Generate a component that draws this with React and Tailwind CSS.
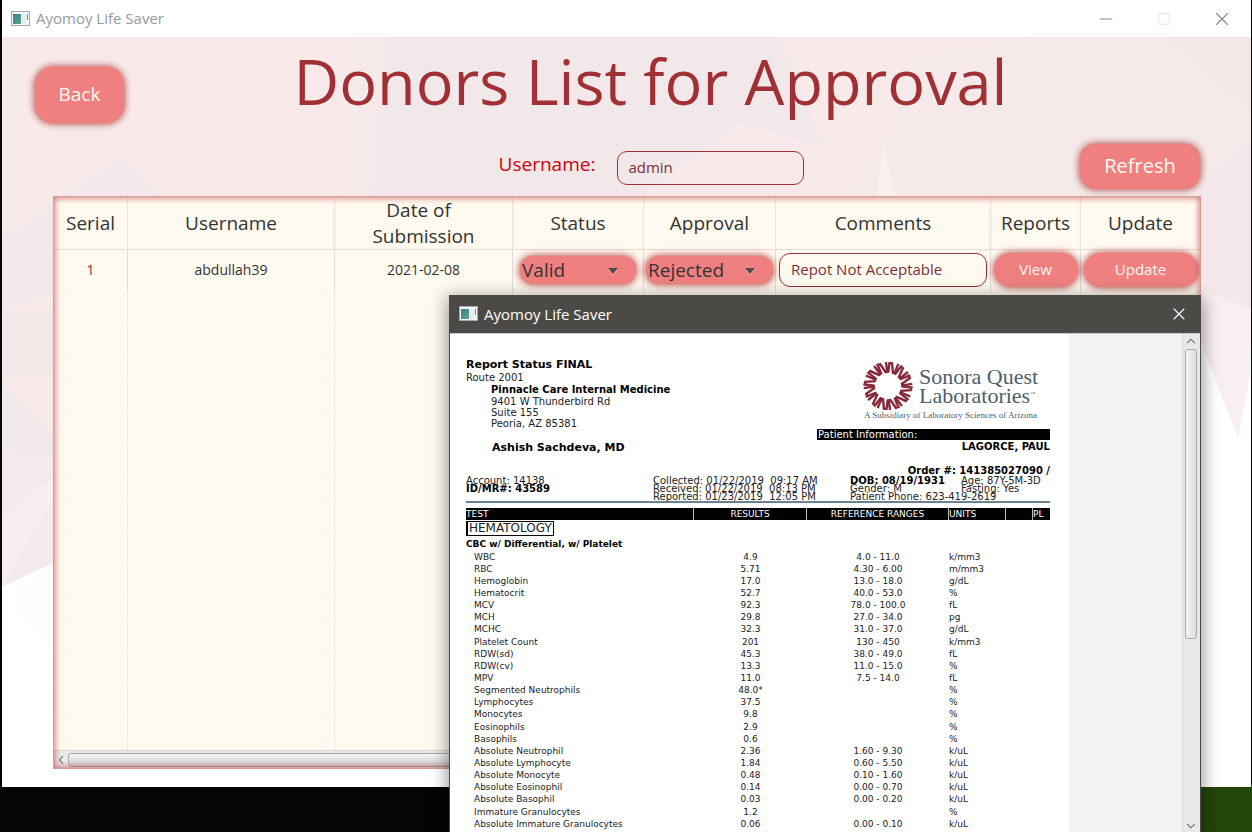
import React from "react";
import { Minus, Square, X, ChevronUp, ChevronDown, ChevronLeft } from "lucide-react";

const RESULTS = [
  ["WBC", "4.9", "4.0 - 11.0", "k/mm3"],
  ["RBC", "5.71", "4.30 - 6.00", "m/mm3"],
  ["Hemoglobin", "17.0", "13.0 - 18.0", "g/dL"],
  ["Hematocrit", "52.7", "40.0 - 53.0", "%"],
  ["MCV", "92.3", "78.0 - 100.0", "fL"],
  ["MCH", "29.8", "27.0 - 34.0", "pg"],
  ["MCHC", "32.3", "31.0 - 37.0", "g/dL"],
  ["Platelet Count", "201", "130 - 450", "k/mm3"],
  ["RDW(sd)", "45.3", "38.0 - 49.0", "fL"],
  ["RDW(cv)", "13.3", "11.0 - 15.0", "%"],
  ["MPV", "11.0", "7.5 - 14.0", "fL"],
  ["Segmented Neutrophils", "48.0*", "", "%"],
  ["Lymphocytes", "37.5", "", "%"],
  ["Monocytes", "9.8", "", "%"],
  ["Eosinophils", "2.9", "", "%"],
  ["Basophils", "0.6", "", "%"],
  ["Absolute Neutrophil", "2.36", "1.60 - 9.30", "k/uL"],
  ["Absolute Lymphocyte", "1.84", "0.60 - 5.50", "k/uL"],
  ["Absolute Monocyte", "0.48", "0.10 - 1.60", "k/uL"],
  ["Absolute Eosinophil", "0.14", "0.00 - 0.70", "k/uL"],
  ["Absolute Basophil", "0.03", "0.00 - 0.20", "k/uL"],
  ["Immature Granulocytes", "1.2", "", "%"],
  ["Absolute Immature Granulocytes", "0.06", "0.00 - 0.10", "k/uL"],
];

const COLUMNS = ["Serial", "Username", "Date of  \nSubmission", "Status", "Approval", "Comments", "Reports", "Update"];

const PILL = "bg-[#f08080] pb-[2px] text-[#fffaf0] shadow-[0_0_7px_1px_#a52a2acc]";

function AppIcon() {
  return (
    <svg width="19" height="16" viewBox="0 0 19 16" aria-hidden="true">
      <defs>
        <linearGradient id="pane" x1="0" y1="0" x2="1" y2="1">
          <stop offset="0" stopColor="#3f7fa0" />
          <stop offset="1" stopColor="#56a878" />
        </linearGradient>
      </defs>
      <rect x="0.5" y="0.5" width="18" height="14" fill="#f4f7f8" stroke="#a3a9ad" />
      <rect x="2" y="3" width="8" height="10" fill="url(#pane)" />
      <rect x="11" y="3" width="4" height="10" fill="#e3eeee" />
      <rect x="16" y="3" width="1" height="6" fill="#4f9d86" />
    </svg>
  );
}

function Backdrop() {
  return (
    <svg className="absolute inset-0 h-full w-full" viewBox="2 37 1249 750" preserveAspectRatio="none" aria-hidden="true">
      <defs>
        <linearGradient id="veil" x1="0" y1="0" x2="1" y2="0">
          <stop offset="0" stopColor="#f9eaea" />
          <stop offset="0.4" stopColor="#f3e8e9" />
        </linearGradient>
      </defs>
      <rect x="2" y="37" width="1249" height="750" fill="#f9eaea" />
      <polygon points="325,37 780,37 830,160 660,197 250,197 300,120" fill="url(#veil)" />
      <polygon points="385,70 372,197 470,197 520,37 390,37" fill="#f3e8e9" />
      <polygon points="2,240 120,155 160,197 160,260 2,312" fill="#f3e8ea" />
      <polygon points="2,312 53,310 53,370 2,380" fill="#f2e8e7" />
      <polygon points="2,380 53,370 53,438" fill="#f8e9e9" />
      <polygon points="2,380 53,438 53,456 2,449" fill="#f1e8e9" />
      <polygon points="2,449 53,456 53,563 2,587" fill="#f4eaeb" />
      <polygon points="2,518 53,477 53,500 2,587" fill="#f8eeef" />
      <polygon points="740,123 830,150 830,197 640,197" fill="#f8eaea" />
      <polygon points="1030,37 1251,37 1251,270 1210,197 840,197 884,142 900,60" fill="#f5e9e9" />
      <polygon points="1165,37 1251,37 1251,110" fill="#f2e8e8" />
      <polygon points="884,142 896,197 876,197" fill="#fbf0f0" />
      <polygon points="1195,190 1251,140 1251,310 1195,300" fill="#f5e8ea" />
      <polygon points="1195,290 1251,310 1251,360 1195,350" fill="#f9eeef" />
      <polygon points="2,587 53,563 1200,300 1251,345 1251,787 2,787" fill="#ffffff" />
      <polygon points="12,600 53,563 53,650" fill="#fefbfc" />
      <polygon points="1180,280 1251,310 1250,375 1238,438 1200,340" fill="#f9eef0" />
    </svg>
  );
}

function Combo({ id, label, value, options, width }) {
  return (
    <div className={`relative mx-auto mt-[6px] ${width}`}>
      <label htmlFor={id} className="sr-only">{label}</label>
      <select id={id} defaultValue={value} className="block h-7 w-full appearance-none rounded-[13px] bg-[#f08080] pl-[2px] text-[19px] leading-normal text-[#333] shadow-[0_0_7px_1px_#a52a2acc]">
        {options.map((o) => <option key={o}>{o}</option>)}
      </select>
      <svg className="pointer-events-none absolute top-3 right-[18px]" width="10" height="7" viewBox="0 0 10 7" aria-hidden="true">
        <path d="M0 1h10L5 7z" fill="#f6b3b3" />
        <path d="M0 0h10L5 6z" fill="#4d4d4d" />
      </svg>
    </div>
  );
}

function DonorTable() {
  const cell = "border-r border-[#dcdcdc] p-0 pb-[2px] align-middle";
  return (
    <div className="relative flex h-[573px] flex-col overflow-hidden border border-[#d79a96] bg-[#fffaf0]">
      <table className="w-full table-fixed border-separate border-spacing-0 text-center text-[#333]">
        <colgroup>
          <col className="w-[74px]" />
          <col />
          <col className="w-[178px]" />
          <col className="w-[131px]" />
          <col className="w-[132px]" />
          <col className="w-[215px]" />
          <col className="w-[90px]" />
          <col className="w-[119px]" />
        </colgroup>
        <thead>
          <tr className="h-[53px]">
            {COLUMNS.map((c) => (
              <th key={c} className="border-r border-b border-r-[#fbdfda] border-b-[#e9dcd8] p-0 text-[19px] leading-[26px] font-normal whitespace-pre last:border-r-0">{c}</th>
            ))}
          </tr>
        </thead>
        <tbody>
          <tr className="h-[42px] text-[15px]">
            <td className={`${cell} text-sm text-[#8b2f20]`}>1</td>
            <td className={`${cell} text-sm`}>abdullah39</td>
            <td className={`${cell} text-sm`}>2021-02-08</td>
            <td className="border-r border-[#dcdcdc] p-0 align-top"><Combo id="status" label="Status" value="Valid" options={["Valid", "Invalid"]} width="w-[116px]" /></td>
            <td className="border-r border-[#dcdcdc] p-0 align-top"><Combo id="approval" label="Approval" value="Rejected" options={["Rejected", "Approved"]} width="w-[127px]" /></td>
            <td className={cell}>
              <input aria-label="Comments" defaultValue="Repot Not Acceptable" className="mx-auto block h-[34px] w-52 rounded-[11px] border border-[#a03035] bg-transparent px-[11px] pb-[2px] text-[15px] text-[#7a3035]" />
            </td>
            <td className={cell}>
              <button className={`${PILL} mx-auto block h-[34px] w-[84px] rounded-[17px]`}>View</button>
            </td>
            <td className="p-0 pb-[2px] align-middle">
              <button className={`${PILL} mx-auto block h-[34px] w-[114px] rounded-[17px]`}>Update</button>
            </td>
          </tr>
          {Array.from({ length: 16 }, (_, i) => (
            <tr key={i} className="h-[30px]">
              {COLUMNS.map((c) => <td key={c} className="border-t border-r border-t-[#fbf6ec] border-r-[#ebebeb] p-0 last:border-r-0" />)}
            </tr>
          ))}
        </tbody>
      </table>
      <div className="absolute inset-x-0 bottom-0 flex h-[18px] items-center border-t border-[#d4d4d4] bg-[#e9e9e9]">
        <button aria-label="Scroll left" className="flex h-4 w-[14px] items-center justify-center"><ChevronLeft size={16} strokeWidth={1.8} color="#555" /></button>
        <div className="mr-4 h-[14px] flex-1 rounded-[3px] border border-[#a9a9a9] bg-linear-to-b from-[#f4f4f4] to-[#cfcfcf]" />
      </div>
      <div className="pointer-events-none absolute inset-0 shadow-[inset_0_0_6px_1px_#b2222299]" />
    </div>
  );
}

function SunMark() {
  return (
    <svg className="shrink-0" width="50" height="48" viewBox="-26 -25 52 50" aria-hidden="true">
      {Array.from({ length: 12 }, (_, i) => (
        <path key={i} transform={`rotate(${i * 30 + 15})`} d="M-3.4 -13.5L-4.8 -24H-2L1.4 -14.6H3.2L4.4 -25" fill="none" stroke="#86293a" strokeWidth="2.5" />
      ))}
    </svg>
  );
}

function Report() {
  return (
    <article className="w-[619px] shrink-0 overflow-hidden bg-white pt-6 pl-4 font-['DejaVu_Sans'] text-[9px] text-[#222]">
      <div className="w-[584px]">
        <header className="flex justify-between">
          <div>
            <h2 className="text-[11px] leading-[14px] font-bold text-black">Report Status FINAL</h2>
            <p className="text-[10px] leading-3">Route 2001</p>
            <address className="pl-[25px] text-[10px] leading-[11px] not-italic">
              <strong className="block leading-3 text-black">Pinnacle Care Internal Medicine</strong>
              9401 W Thunderbird Rd<br />Suite 155<br />Peoria, AZ 85381
            </address>
            <p className="mt-3 pl-[26px] text-[11px] leading-[14px] font-bold text-black">Ashish Sachdeva, MD</p>
          </div>
          <div className="w-[233px] pt-1">
            <div className="flex h-12 gap-[6px] pl-[46px]">
              <SunMark />
              <div className="pt-[5px] font-['Liberation_Serif'] text-[22px] leading-[19px] whitespace-nowrap text-[#4d5f6b]">
                <p>Sonora Quest</p>
                <p>Laboratories<span className="align-super text-[5px] leading-none">™</span></p>
              </div>
            </div>
            <p className="pl-[47px] font-['Liberation_Serif'] text-[9px] leading-[10px] whitespace-nowrap text-[#4d5f6b]">A Subsidiary of Laboratory Sciences of Arizona</p>
            <p className="mt-[9px] bg-black pl-px text-[10px] leading-[11px] text-white">Patient Information:</p>
            <p className="mt-px text-right text-[10px] leading-3 font-bold text-black">LAGORCE, PAUL</p>
            <p className="mt-3 text-right text-[10px] leading-3 font-bold whitespace-nowrap text-black">Order #: 141385027090 /</p>
          </div>
        </header>
        <div className="flex border-b-2 border-[#6d8290] text-[10px] leading-[8px] whitespace-pre">
          <p className="w-[187px]">Account: 14138<br /><strong className="text-black">ID/MR#: 43589</strong></p>
          <p className="w-[197px]">{"Collected: 01/22/2019  09:17 AM\nReceived: 01/22/2019  08:13 PM\nReported: 01/23/2019  12:05 PM"}</p>
          <p className="w-[111px]"><strong className="text-black">DOB: 08/19/1931</strong><br />Gender: M<br />Patient Phone: 623-419-2619</p>
          <p>{"Age: 87Y-5M-3D\nFasting: Yes"}</p>
        </div>
        <table className="mt-[5px] w-full table-fixed border-separate border-spacing-0">
          <colgroup>
            <col className="w-[228px]" />
            <col className="w-[113px]" />
            <col className="w-[142px]" />
            <col className="w-[57px]" />
            <col className="w-[27px]" />
            <col className="w-[17px]" />
          </colgroup>
          <thead>
            <tr className="h-3 bg-black leading-3 text-white [&>th]:border-r [&>th]:border-[#bbb] [&>th]:p-0 [&>th]:font-normal [&>th:last-child]:border-0">
              <th className="text-left">TEST</th>
              <th>RESULTS</th>
              <th>REFERENCE RANGES</th>
              <th className="text-left">UNITS</th>
              <th />
              <th className="text-left">PL</th>
            </tr>
          </thead>
          <tbody className="[&_td]:p-0">
            <tr>
              <td colSpan={6} className="h-[17px]">
                <span className="block w-fit border border-l-2 border-black px-px text-xs leading-[13px]">HEMATOLOGY</span>
              </td>
            </tr>
            <tr>
              <td colSpan={6} className="h-[13px] leading-3 font-bold text-black">CBC w/ Differential, w/ Platelet</td>
            </tr>
          </tbody>
          <tbody className="[&_td]:p-0">
            {RESULTS.map(([test, result, range, unit]) => (
              <tr key={test} className="h-3 leading-3 whitespace-nowrap nth-[7n+1]:h-[13px]">
                <td className="pl-2!">{test}</td>
                <td className="text-center">{result}</td>
                <td className="text-center">{range}</td>
                <td>{unit}</td>
                <td colSpan={2} />
              </tr>
            ))}
          </tbody>
        </table>
      </div>
    </article>
  );
}

function ReportWindow() {
  return (
    <section aria-label="Report" className="absolute top-[295px] right-[51px] bottom-0 left-[449px] flex flex-col border-x border-[#4b4a47] shadow-[0_4px_16px_2px_#00000066]">
      <header className="flex h-[38px] shrink-0 items-center bg-[#4b4a47] pr-[11px] pl-[9px] text-[15px] text-white">
        <AppIcon />
        <span className="ml-[6px] flex-1">Ayomoy Life Saver</span>
        <button aria-label="Close report"><X size={20} strokeWidth={1.3} /></button>
      </header>
      <div className="flex min-h-0 flex-1 overflow-hidden border-t border-[#c8c8c8] bg-[#f2f2f2]">
        <Report />
        <div className="ml-auto flex w-[18px] flex-col items-center border-l border-[#dcdcdc] bg-[#e8e8e8] pr-px">
          <button aria-label="Scroll up" className="flex h-[15px] items-start"><ChevronUp size={14} strokeWidth={1.8} color="#555" /></button>
          <div className="h-[290px] w-3 shrink-0 rounded-[3px] border border-[#ababab] bg-linear-to-r from-[#f4f4f4] to-[#dcdcdc]" />
          <button aria-label="Scroll down" className="mt-auto flex h-3 items-center"><ChevronDown size={14} strokeWidth={1.8} color="#555" /></button>
        </div>
      </div>
    </section>
  );
}

export default function App() {
  return (
    <div className="relative h-screen overflow-hidden bg-[#050505] font-['Open_Sans','Noto_Sans',sans-serif]">
      <div className="absolute right-0 bottom-0 h-12 w-14 bg-[#23460a]" />
      <main className="relative mr-px ml-[2px] bg-white">
        <header className="flex h-[37px] items-center pl-[9px] text-[15px] text-[#999]">
          <AppIcon />
          <span className="ml-[6px] flex-1">Ayomoy Life Saver</span>
          <button aria-label="Minimize" className="flex w-[58px] justify-center"><Minus size={20} strokeWidth={1.2} color="#888" /></button>
          <button aria-label="Maximize" className="flex w-[58px] justify-center"><Square size={14} strokeWidth={1.2} color="#ddd" /></button>
          <button aria-label="Close" className="flex w-[58px] justify-center"><X size={22} strokeWidth={1.2} color="#888" /></button>
        </header>
        <div className="relative">
          <Backdrop />
          <div className="relative pb-[18px]">
            <div className="flex h-[106px] items-start pr-[74px] pl-[33px]">
              <button className={`${PILL} mt-[30px] h-14 w-[89px] rounded-[18px] text-[19px]`}>Back</button>
              <h1 className="flex-1 text-center text-[63px] leading-[88px] text-[#a03033]">Donors List for Approval</h1>
            </div>
            <div className="mr-[50px] ml-[51px]">
              <div className="flex h-[53px] items-start">
                <div className="flex flex-1 items-start justify-center pt-2 pl-[170px]">
                  <label htmlFor="user" className="text-[19px] leading-[26px] text-[#d0000a]">Username:</label>
                  <input id="user" defaultValue="admin" className="ml-[22px] h-[34px] w-[187px] rounded-[10px] border border-[#a03035] bg-transparent px-[10px] pb-[2px] text-[15px] text-[#7a3035]" />
                </div>
                <button className={`${PILL} mt-px mr-px h-[45px] w-[120px] rounded-[16px] text-xl`}>Refresh</button>
              </div>
              <DonorTable />
            </div>
          </div>
        </div>
      </main>
      <ReportWindow />
    </div>
  );
}
